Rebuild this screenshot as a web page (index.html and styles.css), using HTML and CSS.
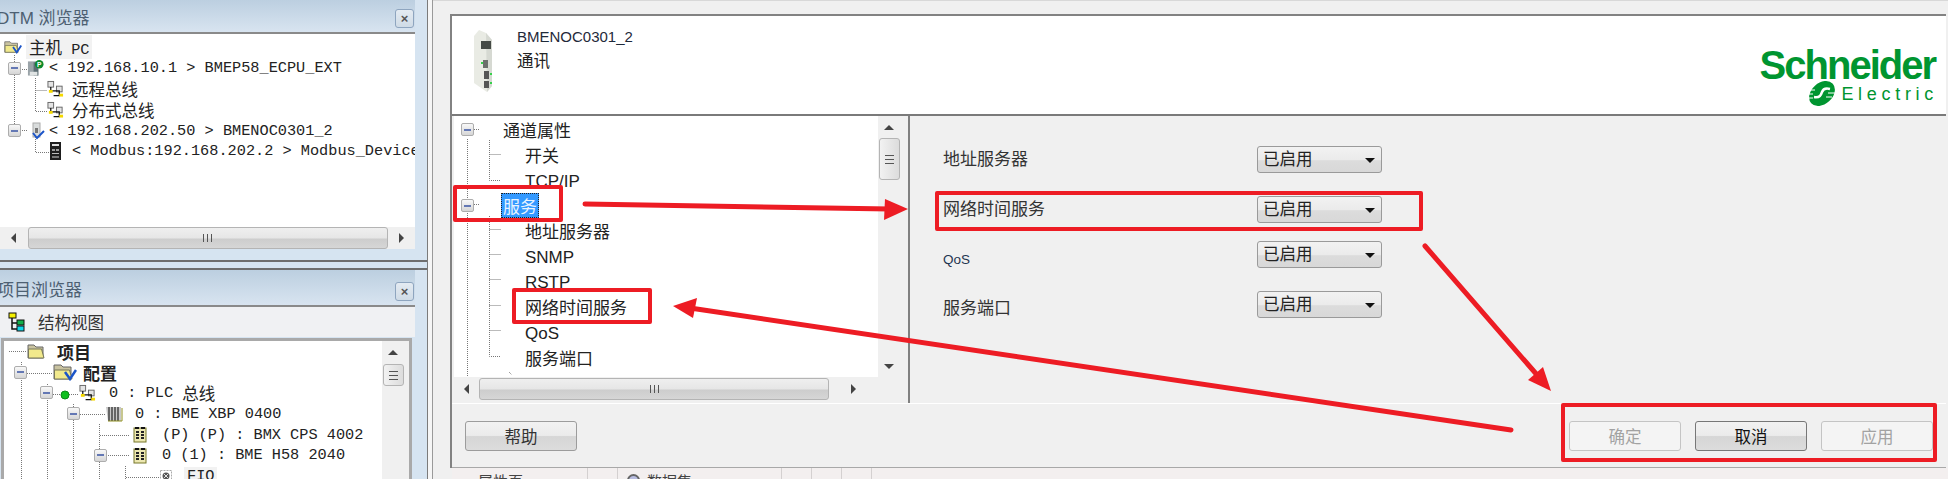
FILE: index.html
```html
<!DOCTYPE html>
<html lang="zh">
<head>
<meta charset="utf-8">
<title>BMENOC0301_2 通讯</title>
<link rel="stylesheet" href="styles.css">
</head>
<body>

<svg class="defs" width="0" height="0">
  <symbol id="folder" viewBox="0 0 18 16">
    <path d="M1 2h6l2 2h7v11H1z" fill="#c9c3a0" stroke="#666"/>
    <path d="M1.500 6h13l2.500 9H1.500z" fill="#f1e98c" stroke="#77775a"/>
  </symbol>
  <symbol id="folder-check" viewBox="0 0 24 18">
    <path d="M1 2h7l2 2h8v12H1z" fill="#c9c3a0" stroke="#666"/>
    <path d="M1.500 7h15l2.500 9H1.500z" fill="#f1e98c" stroke="#77775a"/>
    <path d="M12 9l5 7 6-9" fill="none" stroke="#1c55c8" stroke-width="2.500"/>
  </symbol>
  <symbol id="net" viewBox="0 0 18 18">
    <rect x="1" y="1" width="6" height="6" fill="#e4e4e4" stroke="#666"/>
    <rect x="10" y="6" width="6" height="6" fill="#e4e4e4" stroke="#666"/>
    <path d="M4 7v4h9v5M13 12v4H7" fill="none" stroke="#111" stroke-width="1.300"/>
    <rect x="2" y="10" width="4" height="3" fill="#f4d800"/>
    <rect x="13" y="14" width="4" height="3" fill="#f4d800"/>
  </symbol>
  <symbol id="plc-p" viewBox="0 0 18 18">
    <rect x="1" y="2" width="11" height="15" fill="#9aa3a8"/>
    <rect x="7" y="3" width="5" height="14" fill="#5d6e74"/>
    <rect x="3" y="13" width="8" height="4" fill="#dfe3e3"/>
    <circle cx="13" cy="5" r="4.500" fill="#0b8a2d"/>
    <text x="13" y="7.600" class="svg-p">P</text>
  </symbol>
  <symbol id="mod-check" viewBox="0 0 14 18">
    <rect x="2" y="1" width="7" height="14" fill="#d9dcdc" stroke="#aaa"/>
    <rect x="4" y="6" width="3" height="5" fill="#777"/>
    <path d="M2 11l4 5 7-7" fill="none" stroke="#1c55c8" stroke-width="2"/>
  </symbol>
  <symbol id="device" viewBox="0 0 11 18">
    <rect width="11" height="18" fill="#1d1d1d"/>
    <rect x="2" y="2" width="7" height="2" fill="#ddd"/>
    <rect x="2" y="7" width="3" height="2" fill="#9a9a9a"/>
    <rect x="6" y="7" width="3" height="2" fill="#9a9a9a"/>
    <rect x="2" y="11" width="7" height="1" fill="#bbb"/>
    <rect x="2" y="14" width="7" height="2" fill="#777"/>
  </symbol>
  <symbol id="rack" viewBox="0 0 17 16">
    <path d="M0 1h15v14H2z" fill="#c8c8c8"/>
    <path d="M3 1v14M6 1v14M9 1v14M12 1v14" stroke="#444" stroke-width="1.500"/>
    <path d="M2 15h14V2" fill="none" stroke="#8f8f20"/>
  </symbol>
  <symbol id="cpu" viewBox="0 0 14 17">
    <rect x="1" y="2" width="12" height="14" fill="#ece7b0" stroke="#77772a"/>
    <rect x="2" y="1" width="4" height="2" fill="#111"/>
    <rect x="8" y="1" width="4" height="2" fill="#111"/>
    <path d="M4.500 5v9M9.500 5v9" stroke="#222" stroke-width="3" stroke-dasharray="2 1"/>
  </symbol>
  <symbol id="fio" viewBox="0 0 12 12">
    <rect x=".5" y=".5" width="11" height="11" fill="#fff" stroke="#aaa" stroke-dasharray="2 1"/>
    <circle cx="6" cy="6" r="3.500" fill="#555"/>
    <path d="M4 4l4 4M8 4l-4 4" stroke="#ddd"/>
  </symbol>
  <symbol id="struct" viewBox="0 0 18 20">
    <path d="M4 6v11h5M4 11h5" fill="none" stroke="#111" stroke-width="1.500"/>
    <rect x="1" y="1" width="7" height="5" fill="#f5f000" stroke="#111"/>
    <rect x="9" y="8" width="7" height="5" fill="#12b04a" stroke="#111"/>
    <rect x="9" y="14" width="7" height="5" fill="#10d8e8" stroke="#111"/>
  </symbol>
</svg>

<div class="page">

  <aside class="side">
    <section class="panel dtm-panel">
      <div class="title"><span class="title-text">DTM 浏览器</span><span class="close">×</span></div>
      <div class="tree-dtm">
        <svg class="links" width="415" height="193">
          <path d="M14.500 21v75M35.500 44v33.500H47M35.500 56.500H47M35.500 103v15.500H49M20 35.500h7M20 96.500h7"/>
        </svg>
        <div class="row d1"><svg class="ico" width="18" height="16"><use href="#folder-check"/></svg><span class="hover-name"><span class="zh">主机</span> PC</span></div>
        <div class="row d2"><span class="mb"></span><svg class="ico" width="17" height="18"><use href="#plc-p"/></svg>&lt; 192.168.10.1 &gt; BMEP58_ECPU_EXT</div>
        <div class="row d3"><svg class="ico" width="17" height="18"><use href="#net"/></svg><span class="zh">远程总线</span></div>
        <div class="row d3"><svg class="ico" width="17" height="18"><use href="#net"/></svg><span class="zh">分布式总线</span></div>
        <div class="row d5"><span class="mb"></span><svg class="ico" width="14" height="18"><use href="#mod-check"/></svg>&lt; 192.168.202.50 &gt; BMENOC0301_2</div>
        <div class="row d6"><svg class="ico" width="11" height="18"><use href="#device"/></svg>&lt; Modbus:192.168.202.2 &gt; Modbus_Device</div>
      </div>
      <div class="hbar hbar-dtm">
        <span class="sb-btn"><i class="arr-l"></i></span>
        <span class="h-thumb"><i class="grip-v"></i></span>
        <span class="sb-btn"><i class="arr-r"></i></span>
      </div>
    </section>

    <section class="panel proj-panel">
      <div class="title title-proj"><span class="title-text">项目浏览器</span><span class="close">×</span></div>
      <div class="toolbar"><svg width="18" height="20"><use href="#struct"/></svg><span>结构视图</span></div>
      <div class="proj-box">
        <div class="tree-proj">
          <svg class="links" width="378" height="140">
            <path d="M5 10.500h18M17.500 21v118M23 32.500h26M43.500 43v96M49 53.500h26M69.500 63v76M76 73.500h26M95.500 83v56M96 94.500h30M102 114.500h24M121.500 125v14M122 136.500h33"/>
            <circle class="dot" cx="61" cy="54" r="4"/>
          </svg>
          <div class="row p1"><svg class="ico" width="18" height="16"><use href="#folder"/></svg><b class="zh">项目</b></div>
          <div class="row p2"><span class="mb"></span><svg class="ico" width="24" height="18"><use href="#folder-check"/></svg><b class="zh">配置</b></div>
          <div class="row p3"><span class="mb"></span><svg class="ico" width="17" height="18"><use href="#net"/></svg>0 : PLC <span class="zh">总线</span></div>
          <div class="row p4"><span class="mb"></span><svg class="ico" width="17" height="16"><use href="#rack"/></svg>0 : BME XBP 0400</div>
          <div class="row p5"><svg class="ico" width="14" height="17"><use href="#cpu"/></svg>(P) (P) : BMX CPS 4002</div>
          <div class="row p6"><span class="mb"></span><svg class="ico" width="14" height="17"><use href="#cpu"/></svg>0 (1) : BME H58 2040</div>
          <div class="row p7"><svg class="ico" width="12" height="12"><use href="#fio"/></svg><span class="hover-name">FIO</span></div>
        </div>
        <div class="vbar vbar-proj">
          <i class="arr-u"></i>
          <span class="v-thumb"><i class="grip-h"></i></span>
        </div>
      </div>
    </section>
  </aside>

  <div class="gutter"></div>

  <main class="main">
    <div class="dialog">
      <header class="head">
        <svg class="module" width="20" height="62" viewBox="0 0 20 62">
          <path d="M0 6l5-6 7 3 6 7v46l-5 6-13-9z" fill="#e9ebe4"/>
          <path d="M12 3l6 7v46l-5 6z" fill="#d6d9d2"/>
          <rect x="7" y="11" width="10" height="8" fill="#454a46"/>
          <rect x="9" y="30" width="5" height="8" fill="#6b6f6b"/>
          <rect x="10" y="41" width="5" height="8" fill="#555"/>
          <rect x="10" y="51" width="5" height="7" fill="#555"/>
          <rect x="7" y="32" width="2" height="2" fill="#35d04a"/>
          <rect x="16" y="43" width="2" height="2" fill="#35d04a"/>
          <rect x="16" y="52" width="2" height="2" fill="#35d04a"/>
        </svg>
        <div class="head-text">
          <div class="head-name">BMENOC0301_2</div>
          <div class="head-sub">通讯</div>
        </div>
        <div class="logo">
          <div class="logo-top">Schneider</div>
          <div class="logo-bottom">
            <svg width="27" height="27" viewBox="0 0 27 27">
              <ellipse cx="14" cy="13.500" rx="14.500" ry="10.500" transform="rotate(-42 14 13.500)" fill="#009530"/>
              <path d="M6 17c6 1 7-2 8-5s4-4 8-3" fill="none" stroke="#fff" stroke-width="2.500"/>
              <path d="M0 10h7M0 14h5M0 18h5M20 13h7M18 17h6" stroke="#fff"/>
            </svg>
            <span>Electric</span>
          </div>
        </div>
      </header>

      <div class="body">
        <div class="tree-pane">
          <div class="tree-top">
            <div class="tree-cfg">
              <svg class="links" width="424" height="261">
                <path d="M13.500 23v238M20 13.500h5M35.500 24v40.500H47M35.500 38.500H47M20 88.500h5M35.500 100v140.500H47M35.500 113.500H47M35.500 138.500H47M35.500 163.500H47M35.500 189.500H47M35.500 214.500H47M55 256l3 3"/>
              </svg>
              <div class="row c0"><span class="mb"></span><span class="c-label">通道属性</span></div>
              <div class="row c1">开关</div>
              <div class="row c1 lat">TCP/IP</div>
              <div class="row c0"><span class="mb"></span><span class="c-label c-sel">服务</span></div>
              <div class="row c1">地址服务器</div>
              <div class="row c1 lat">SNMP</div>
              <div class="row c1 lat">RSTP</div>
              <div class="row c1">网络时间服务</div>
              <div class="row c1 lat">QoS</div>
              <div class="row c1">服务端口</div>
              <div class="row c1 peek">安全</div>
            </div>
            <div class="vbar vbar-cfg">
              <i class="arr-u"></i>
              <span class="v-thumb v-thumb-cfg"><i class="grip-h"></i></span>
              <i class="arr-d"></i>
            </div>
          </div>
          <div class="hbar hbar-cfg">
            <span class="sb-btn"><i class="arr-l"></i></span>
            <span class="h-thumb"><i class="grip-v"></i></span>
            <span class="sb-btn"><i class="arr-r"></i></span>
          </div>
        </div>

        <div class="form">
          <div class="frow"><label>地址服务器</label><span class="select">已启用</span></div>
          <div class="frow"><label>网络时间服务</label><span class="select">已启用</span></div>
          <div class="frow frow-tight"><label class="lbl-qos">QoS</label><span class="select">已启用</span></div>
          <div class="frow"><label class="lbl-low">服务端口</label><span class="select">已启用</span></div>
        </div>
      </div>

      <footer class="foot">
        <button class="btn">帮助</button>
        <span class="spacer"></span>
        <button class="btn btn-off">确定</button>
        <button class="btn btn-dark">取消</button>
        <button class="btn btn-off">应用</button>
      </footer>
    </div>

    <div class="status">
      <span class="st st-a">属性页</span>
      <span class="st st-b"></span>
      <span class="st st-c"><i class="st-ico"></i>数据集</span>
      <span class="st st-d"></span>
      <span class="st st-d"></span>
      <span class="st st-d"></span>
    </div>
  </main>

  <svg class="notes" width="1948" height="479">
    <g fill="none" stroke="#ed1c24" stroke-linejoin="round">
      <rect x="455" y="187" width="106" height="33" stroke-width="4"/>
      <rect x="514" y="290" width="136" height="32" stroke-width="4"/>
      <rect x="937" y="193" width="484" height="36" stroke-width="4"/>
      <rect x="1563" y="405" width="372" height="55" stroke-width="4"/>
    </g>
    <g fill="none" stroke="#ed1c24" stroke-width="5" stroke-linecap="round">
      <path d="M585 204L890 209"/>
      <path d="M1511 430L690 308"/>
      <path d="M1425 246L1538 376"/>
    </g>
    <g fill="#ed1c24">
      <path d="M908 209L885 199L884 220z"/>
      <path d="M673 306L697 298L693 318z"/>
      <path d="M1551 391L1528 380L1543 367z"/>
    </g>
  </svg>
</div>

</body>
</html>
```

FILE: styles.css
```css
html, body {
  margin: 0;
  padding: 0;
  overflow: hidden;
}
body {
  width: 1948px;
  height: 479px;
  background: #f0f0f0;
  color: #222;
  font-family: "Liberation Sans", "Noto Sans CJK SC", sans-serif;
}
.defs {
  display: block;
  height: 0;
}
.svg-p {
  fill: #fff;
  font: bold 7px "Liberation Sans", sans-serif;
  text-anchor: middle;
}
.page {
  position: relative;
  display: flex;
  width: 1948px;
  height: 479px;
  overflow: hidden;
}
.notes {
  position: absolute;
  left: 0;
  top: 0;
}

/* left column */
.side {
  width: 427px;
  height: 479px;
  flex: none;
  background: #d6e4f1;
  border-right: 1px solid #7b7b7b;
  overflow: hidden;
}
.panel {
  padding-right: 12px;
}
.dtm-panel {
  height: 260px;
  border-bottom: 2px solid #6e6e6e;
}
.proj-panel {
  margin-top: 6px;
  border-top: 2px solid #6e6e6e;
}
.title {
  display: flex;
  align-items: center;
  justify-content: space-between;
  height: 32px;
  padding-right: 1px;
  background: linear-gradient(#bccfe0, #d8e4f0);
  border-bottom: 2px solid #8a8a8a;
}
.title-proj {
  height: 35px;
}
.title-text {
  margin: 6px 0 0 -3px;
  color: #4d6072;
  font-size: 17px;
  line-height: 24px;
}
.close {
  box-sizing: border-box;
  width: 19px;
  height: 19px;
  margin-top: 5px;
  border: 1px solid #8ea5bf;
  border-radius: 3px;
  background: linear-gradient(#e4ebf2, #cfdbe6);
  color: #555;
  font: bold 13px/17px "Liberation Sans", sans-serif;
  text-align: center;
}
.title-proj .close {
  margin-top: 8px;
}

/* tree rows */
.row {
  position: relative;
  display: flex;
  align-items: center;
  white-space: pre;
}
.links {
  position: absolute;
  left: 0;
  top: 0;
}
.links path {
  fill: none;
  stroke: #777;
  stroke-dasharray: 1 1;
}
.dot {
  fill: #0fc01f;
  stroke: #0a8a18;
}
.zh {
  font-family: "Noto Sans CJK SC", sans-serif;
  font-size: 16.5px;
}
.mb {
  display: flex;
  align-items: center;
  justify-content: center;
  box-sizing: border-box;
  width: 13px;
  height: 13px;
  flex: none;
  border: 1px solid #adadad;
  border-radius: 2px;
  background: linear-gradient(#f8f8f8, #d6d6d6);
}
.mb::before {
  content: "";
  width: 7px;
  height: 2px;
  background: #6478b4;
}
.ico {
  flex: none;
}
.hover-name {
  background: #f2f2f2;
  padding: 0 3px;
}

.tree-dtm, .tree-proj {
  position: relative;
  font-family: "Liberation Mono", "Noto Sans CJK SC", monospace;
  font-size: 15.25px;
  color: #222;
  background: #fff;
  overflow: hidden;
}
.tree-dtm {
  height: 193px;
  padding-top: 3px;
  box-sizing: border-box;
}
.tree-dtm .row {
  height: 20.8px;
}
.d1 { padding-left: 4px; }
.d1 .ico { margin-right: 4px; }
.d2 { padding-left: 8px; }
.d2 .mb { margin-right: 6px; }
.d2 .ico { margin-right: 5px; }
.d3 { padding-left: 47px; }
.d3 .ico { margin-right: 8px; }
.d5 { padding-left: 8px; }
.d5 .mb { margin-right: 10px; }
.d5 .ico { margin-right: 4px; }
.d6 { padding-left: 50px; }
.d6 .ico { margin-right: 11px; }

.hbar {
  display: flex;
  align-items: stretch;
  background: #f0f0f0;
}
.hbar-dtm {
  height: 22px;
}
.sb-btn {
  display: flex;
  align-items: center;
  justify-content: center;
  flex: 1;
}
.hbar-dtm .h-thumb {
  width: 360px;
}
.h-thumb {
  display: flex;
  align-items: center;
  justify-content: center;
  box-sizing: border-box;
  flex: none;
  border: 1px solid #b4b4b4;
  border-radius: 3px;
  background: linear-gradient(#efefef 0%, #e6e6e6 50%, #cdcdcd 55%, #d6d6d6 100%);
}
.grip-v {
  width: 9px;
  height: 8px;
  background: repeating-linear-gradient(90deg, #555 0 1px, transparent 1px 4px);
}
.grip-h {
  display: block;
  width: 9px;
  height: 9px;
  background: repeating-linear-gradient(#555 0 1px, transparent 1px 4px);
}
.arr-l, .arr-r, .arr-u, .arr-d {
  display: block;
  width: 0;
  height: 0;
  border-style: solid;
  border-color: transparent;
}
.arr-l { border-width: 5px 5px 5px 0; border-right-color: #444; }
.arr-r { border-width: 5px 0 5px 5px; border-left-color: #444; }
.arr-u { border-width: 0 5px 5px; border-bottom-color: #444; }
.arr-d { border-width: 5px 5px 0; border-top-color: #444; }

/* project browser */
.toolbar {
  display: flex;
  align-items: center;
  gap: 12px;
  height: 30px;
  padding-left: 8px;
  background: #f0f1f3;
  font-size: 16.5px;
  color: #333;
}
.proj-box {
  display: flex;
  height: 140px;
  margin: 1px 3px 0 1px;
  border: solid #a9a9a9;
  border-width: 3px 3px 0;
  background: #f0f0f0;
  padding-right: 2px;
}
.tree-proj {
  width: 378px;
  height: 140px;
  flex: none;
}
.tree-proj .row {
  height: 20.8px;
}
.tree-proj b.zh {
  font-size: 17px;
}
.p1 { padding-left: 23px; }
.p1 .ico { margin-right: 12px; }
.p2 { padding-left: 10px; }
.p2 .mb { margin-right: 26px; }
.p2 .ico { margin-right: 6px; }
.p3 { padding-left: 36px; }
.p3 .mb { margin-right: 26px; }
.p3 .ico { margin-right: 13px; }
.p4 { padding-left: 63px; }
.p4 .mb { margin-right: 26px; }
.p4 .ico { margin-right: 12px; }
.p5 { padding-left: 129px; }
.p5 .ico { margin-right: 15px; }
.p6 { padding-left: 90px; }
.p6 .mb { margin-right: 26px; }
.p6 .ico { margin-right: 15px; }
.p7 { padding-left: 156px; }
.p7 .ico { margin-right: 12px; }

.vbar {
  display: flex;
  flex-direction: column;
  align-items: center;
  flex: none;
  width: 22px;
  background: #f0f0f0;
}
.vbar .arr-u {
  margin-top: 9px;
  flex: none;
}
.v-thumb {
  display: flex;
  align-items: center;
  justify-content: center;
  box-sizing: border-box;
  width: 21px;
  height: 22px;
  margin-top: 9px;
  border: 1px solid #b4b4b4;
  border-radius: 3px;
  background: linear-gradient(90deg, #f2f2f2, #dcdcdc);
}
.v-thumb-cfg {
  height: 42px;
  margin-top: 8px;
}
.vbar-cfg .arr-d {
  margin-top: auto;
  margin-bottom: 9px;
}

.gutter {
  width: 4px;
  flex: none;
  background: #f6f6f6;
  border-right: 1px solid #9a9a9a;
}

/* dialog */
.main {
  flex: 1;
  min-width: 0;
  border-top: 1px solid #d8d8d8;
  padding-left: 17px;
}
.dialog {
  width: 1496px;
  margin-top: 13px;
  border-top: 2px solid #828282;
  border-left: 2px solid #828282;
  box-sizing: border-box;
}
.head {
  display: flex;
  height: 98px;
  background: #fff;
  border-bottom: 2px solid #7a7a7a;
}
.module {
  margin: 14px 0 0 22px;
  flex: none;
}
.head-text {
  margin: 12px 0 0 23px;
}
.head-name {
  font-size: 15px;
  line-height: 18px;
  color: #1f2a3a;
}
.head-sub {
  margin-top: 3px;
  font-size: 16.5px;
  line-height: 24px;
}
.logo {
  margin: 34px 11px 0 auto;
  color: #009530;
  text-align: right;
}
.logo-top {
  font-weight: bold;
  font-size: 40px;
  line-height: 30px;
  letter-spacing: -2px;
}
.logo-bottom {
  display: flex;
  justify-content: flex-end;
  align-items: center;
  gap: 6px;
  font-size: 18px;
  line-height: 20px;
  letter-spacing: 4.7px;
}
.logo-bottom span {
  margin-right: -3px;
}

.body {
  display: flex;
  height: 287px;
}
.tree-pane {
  width: 458px;
  flex: none;
  box-sizing: border-box;
  padding-left: 2px;
  border-right: 2px solid #808080;
}
.tree-top {
  display: flex;
  height: 262px;
}
.tree-cfg {
  position: relative;
  width: 424px;
  height: 261px;
  flex: none;
  padding-top: 1px;
  box-sizing: border-box;
  background: #fff;
  font-size: 17px;
  color: #222;
  overflow: hidden;
}
.tree-cfg .row {
  height: 25.3px;
  box-sizing: border-box;
}
.tree-cfg .lat {
  padding-top: 3px;
}
.tree-cfg .peek {
  margin-top: 5px;
}
.c0 { padding-left: 7px; }
.c0 .mb { margin-right: 28px; }
.c1 { padding-left: 71px; }
.c-label {
  padding: 0 1px;
}
.c-sel {
  padding: 0 2px;
  margin-left: -1px;
  background: #3399ff;
  color: #e8f4ff;
  outline: 1px dotted #222;
  outline-offset: -1px;
}
.hbar-cfg {
  width: 424px;
  height: 22px;
}
.hbar-cfg .h-thumb {
  width: 350px;
}
.hbar-cfg .sb-btn:first-child {
  flex: none;
  width: 25px;
}

.form {
  flex: 1;
  padding: 30px 0 0 33px;
}
.frow {
  display: flex;
  height: 27px;
  font-size: 17px;
  color: #333;
}
.frow + .frow {
  margin-top: 23px;
}
.frow + .frow-tight {
  margin-top: 18px;
}
.frow label {
  width: 314px;
  flex: none;
  line-height: 27px;
}
.frow .lbl-qos {
  padding-top: 5px;
  font-size: 13.5px;
  color: #1f3550;
  box-sizing: border-box;
}
.frow .lbl-low {
  padding-top: 4px;
  box-sizing: border-box;
}
.select {
  position: relative;
  box-sizing: border-box;
  width: 125px;
  height: 27px;
  padding-left: 5px;
  border: 1px solid #9a9a9a;
  border-radius: 3px;
  background: linear-gradient(#f2f2f2 0%, #ebebeb 50%, #dcdcdc 55%, #d8d8d8 100%);
  font-size: 16.5px;
  line-height: 24px;
  color: #222;
}
.select::after {
  content: "";
  position: absolute;
  right: 6px;
  top: 11px;
  border-style: solid;
  border-width: 5px 5px 0;
  border-color: #111 transparent transparent;
}

.foot {
  display: flex;
  align-items: flex-start;
  gap: 14px;
  height: 65px;
  box-sizing: border-box;
  padding: 17px 13px 0;
  border-top: 1px solid #fff;
  border-bottom: 1px solid #a8a8a8;
}
.spacer {
  flex: 1;
}
.btn {
  width: 112px;
  height: 30px;
  padding: 0;
  border: 1px solid #9c9c9c;
  border-radius: 3px;
  background: linear-gradient(#f2f2f2 0%, #ebebeb 48%, #d6d6d6 52%, #dcdcdc 100%);
  color: #333;
  font: 16.5px "Noto Sans CJK SC", sans-serif;
}
.btn-off {
  border-color: #c4c4c4;
  background: #f4f4f4;
  color: #a2a2a2;
}
.btn-dark {
  border-color: #777;
  color: #111;
}

.status {
  display: flex;
  height: 12px;
  margin-left: 2px;
  background: #f3efef;
  font-size: 15px;
  line-height: 22px;
  padding-top: 3px;
  color: #444;
  overflow: hidden;
}
.st {
  border-right: 1px solid #d4d0d0;
  box-sizing: border-box;
  height: 30px;
  margin-top: -3px;
  padding-top: 3px;
}
.st-a { width: 136px; padding-left: 26px; }
.st-b { width: 30px; }
.st-c { width: 164px; padding-left: 9px; }
.st-ico {
  display: inline-block;
  box-sizing: border-box;
  width: 13px;
  height: 13px;
  margin-right: 7px;
  border: 2px solid #666;
  border-radius: 50%;
  background: #b8bce0;
}
.st-d { width: 30px; }
```
